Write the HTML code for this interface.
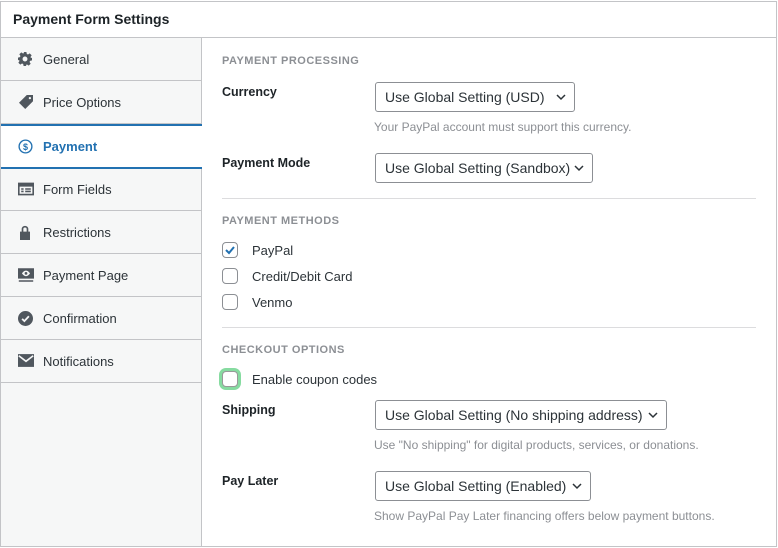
<!DOCTYPE html>
<html><head><meta charset="utf-8"><style>
*{box-sizing:border-box;margin:0;padding:0}
body{width:778px;height:548px;background:#fff;font-family:"Liberation Sans","DejaVu Sans",sans-serif;color:#1d2327;position:relative;overflow:hidden}
.box{position:absolute;left:0;top:1px;width:777px;height:546px;border:1px solid #c3c4c7}
.hdr{position:absolute;left:0;top:0;width:775px;height:36px;border-bottom:1px solid #c3c4c7;font-weight:bold;font-size:14px;padding:9px 0 0 12px}
.side{position:absolute;left:0;top:36px;width:201px;height:508px;background:#f6f7f7;border-right:1px solid #c3c4c7}
.it{position:absolute;left:0;width:200px;height:43px;border-bottom:1px solid #c3c4c7;font-size:13px;color:#2c3338;padding:14px 0 0 42px}
.it svg{position:absolute;left:17px;top:14px}
.it.act{background:#fff;border-top:2px solid #2271b1;border-bottom:2px solid #2271b1;color:#2271b1;font-weight:bold;width:201px}
.a{position:absolute;white-space:nowrap}
.sec{font-size:11px;font-weight:bold;color:#8c8f94;letter-spacing:.5px}
.lbl{font-size:12.5px;font-weight:bold;color:#1d2327}
.sel{position:absolute;height:30px;border:1px solid #8c8f94;border-radius:3px;font-size:14px;padding:6px 0 0 9px;color:#2c3338}
.sel svg{position:absolute;right:8px;top:11px}
.hint{font-size:12px;color:#8c8f94}
.hr{position:absolute;left:222px;width:534px;height:1px;background:#dcdcde}
.cb{position:absolute;left:222px;width:16px;height:16px;border:1px solid #8c8f94;border-radius:4px;background:#fff}
.ct{font-size:13px;color:#2c3338}
</style></head><body>
<div class="box">
<div class="hdr">Payment Form Settings</div>
<div class="side">
<div class="it" style="top:0"><svg width="14" height="14" viewBox="0 0 20 20"><path fill="#50575e" d="M8 0h4l.6 2.8 1.7.7 2.4-1.6 2.8 2.8-1.6 2.4.7 1.7L20 8v4l-2.8.6-.7 1.7 1.6 2.4-2.8 2.8-2.4-1.6-1.7.7L12 20H8l-.6-2.8-1.7-.7-2.4 1.6-2.8-2.8 1.6-2.4-.7-1.7L0 12V8l2.8-.6.7-1.7-1.6-2.4 2.8-2.8 2.4 1.6 1.7-.7zM10 6.5a3.5 3.5 0 1 0 0 7 3.5 3.5 0 0 0 0-7z"/></svg>General</div>
<div class="it" style="top:43px"><svg width="16" height="14" viewBox="0 0 20 18"><path fill="#50575e" d="M11 0h8v8L9 18 1 10zM15 2.5a1.5 1.5 0 1 0 0 3 1.5 1.5 0 0 0 0-3z"/></svg>Price Options</div>
<div class="it act" style="top:86px;height:45px;padding-top:13px"><svg width="15" height="15" viewBox="0 0 20 20" style="top:13px"><circle cx="10" cy="10" r="8.5" fill="none" stroke="#2271b1" stroke-width="1.8"/><text x="10" y="14.5" font-size="12" font-weight="bold" text-anchor="middle" fill="#2271b1" font-family="Liberation Sans">$</text></svg>Payment</div>
<div class="it" style="top:131px;height:42px;padding-top:13px"><svg width="16" height="14" viewBox="0 0 20 16" style="top:13px"><path fill="#50575e" d="M0 0h20v16H0zM2 5v9h16V5zM4 7h3v2H4zm5 0h7v2H9zM4 10h3v2H4zm5 0h7v2H9z"/></svg>Form Fields</div>
<div class="it" style="top:173px"><svg width="14" height="15" viewBox="0 0 16 18"><path fill="#50575e" d="M2 8h12v10H2zM4 8V5a4 4 0 0 1 8 0v3h-2V5a2 2 0 0 0-4 0v3z"/></svg>Restrictions</div>
<div class="it" style="top:216px"><svg width="16" height="14" viewBox="0 0 20 17"><path fill="#50575e" d="M0 0h20v13H0zM10 3c-3 0-5 3.5-5 3.5S7 10 10 10s5-3.5 5-3.5S13 3 10 3zm0 1.8a1.7 1.7 0 1 1 0 3.4 1.7 1.7 0 0 1 0-3.4zM1 15h18v2H1z"/></svg>Payment Page</div>
<div class="it" style="top:259px"><svg width="15" height="15" viewBox="0 0 20 20"><circle cx="10" cy="10" r="10" fill="#50575e"/><path d="M5.5 10.5l3 3 6-6.5" stroke="#f6f7f7" stroke-width="2.4" fill="none"/></svg>Confirmation</div>
<div class="it" style="top:302px"><svg width="16" height="13" viewBox="0 0 20 16"><path fill="#50575e" d="M0 0h20v16H0z"/><path d="M1 2l9 7 9-7" stroke="#f6f7f7" stroke-width="2" fill="none"/></svg>Notifications</div>
</div>
</div>

<div class="a sec" style="left:222px;top:55px">PAYMENT PROCESSING</div>
<div class="a lbl" style="left:222px;top:85px">Currency</div>
<div class="sel" style="left:375px;top:82px;width:200px">Use Global Setting (USD)<svg width="10" height="7" viewBox="0 0 10 7"><path d="M1 1l4 4 4-4" stroke="#2c3338" stroke-width="1.5" fill="none"/></svg></div>
<div class="a hint" style="left:374px;top:120px">Your PayPal account must support this currency.</div>
<div class="a lbl" style="left:222px;top:156px">Payment Mode</div>
<div class="sel" style="left:375px;top:153px;width:218px">Use Global Setting (Sandbox)<svg width="10" height="7" viewBox="0 0 10 7"><path d="M1 1l4 4 4-4" stroke="#2c3338" stroke-width="1.5" fill="none"/></svg></div>
<div class="hr" style="top:198px"></div>
<div class="a sec" style="left:222px;top:215px">PAYMENT METHODS</div>
<div class="cb" style="top:242px"><svg width="14" height="14" viewBox="0 0 14 14"><path d="M3 7l3 3 5-6" stroke="#2271b1" stroke-width="2" fill="none"/></svg></div>
<div class="a ct" style="left:252px;top:243px">PayPal</div>
<div class="cb" style="top:268px"></div>
<div class="a ct" style="left:252px;top:269px">Credit/Debit Card</div>
<div class="cb" style="top:294px"></div>
<div class="a ct" style="left:252px;top:295px">Venmo</div>
<div class="hr" style="top:327px"></div>
<div class="a sec" style="left:222px;top:344px">CHECKOUT OPTIONS</div>
<div class="cb" style="top:371px;border-color:#999;box-shadow:0 0 0 3px #86dba0"></div>
<div class="a ct" style="left:252px;top:372px">Enable coupon codes</div>
<div class="a lbl" style="left:222px;top:403px">Shipping</div>
<div class="sel" style="left:375px;top:400px;width:292px">Use Global Setting (No shipping address)<svg width="10" height="7" viewBox="0 0 10 7"><path d="M1 1l4 4 4-4" stroke="#2c3338" stroke-width="1.5" fill="none"/></svg></div>
<div class="a hint" style="left:374px;top:438px">Use "No shipping" for digital products, services, or donations.</div>
<div class="a lbl" style="left:222px;top:474px">Pay Later</div>
<div class="sel" style="left:375px;top:471px;width:216px">Use Global Setting (Enabled)<svg width="10" height="7" viewBox="0 0 10 7"><path d="M1 1l4 4 4-4" stroke="#2c3338" stroke-width="1.5" fill="none"/></svg></div>
<div class="a hint" style="left:374px;top:509px">Show PayPal Pay Later financing offers below payment buttons.</div>
</body></html>
